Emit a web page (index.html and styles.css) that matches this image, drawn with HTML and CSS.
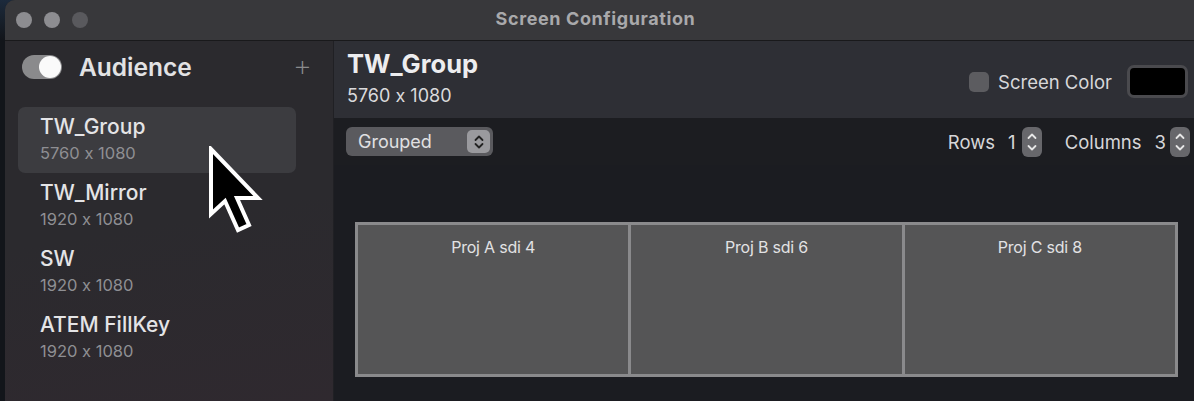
FILE: index.html
```html
<!DOCTYPE html>
<html>
<head>
<meta charset="utf-8">
<link rel="stylesheet" href="styles.css">
</head>
<body>
<div class="desk">
  <div class="window">
    <div class="titlebar">
      <div class="lights">
        <span class="light"></span><span class="light"></span><span class="light dim"></span>
      </div>
      <div class="title">Screen Configuration</div>
    </div>
    <div class="content">
      <aside class="sidebar">
        <div class="side-head">
          <div class="toggle"><span class="knob"></span></div>
          <div class="side-title">Audience</div>
          <div class="plus">+</div>
        </div>
        <ul class="list">
          <li class="item selected"><div class="name">TW_Group</div><div class="res">5760 x 1080</div></li>
          <li class="item"><div class="name">TW_Mirror</div><div class="res">1920 x 1080</div></li>
          <li class="item"><div class="name">SW</div><div class="res">1920 x 1080</div></li>
          <li class="item"><div class="name">ATEM FillKey</div><div class="res">1920 x 1080</div></li>
        </ul>
      </aside>
      <main class="main">
        <div class="header">
          <div class="head-left">
            <div class="h-title">TW_Group</div>
            <div class="h-res">5760 x 1080</div>
          </div>
          <div class="head-right">
            <span class="checkbox"></span>
            <span class="sc-label">Screen Color</span>
            <span class="well"></span>
          </div>
        </div>
        <div class="toolbar">
          <div class="popup">
            <span class="popup-text">Grouped</span>
            <span class="popup-arrows">
              <svg width="14" height="18" viewBox="0 0 14 18"><path d="M3.5 7 L7 3.5 L10.5 7 M3.5 11 L7 14.5 L10.5 11" fill="none" stroke="#222" stroke-width="1.8" stroke-linecap="round" stroke-linejoin="round"/></svg>
            </span>
          </div>
          <div class="tools-right">
            <span class="t-label">Rows</span>
            <span class="t-val">1</span>
            <span class="stepper"><svg width="14" height="26" viewBox="0 0 14 26"><path d="M3.5 9 L7 5.5 L10.5 9 M3.5 17 L7 20.5 L10.5 17" fill="none" stroke="#e6e6e6" stroke-width="1.8" stroke-linecap="round" stroke-linejoin="round"/></svg></span>
            <span class="t-label cols">Columns</span>
            <span class="t-val">3</span>
            <span class="stepper"><svg width="14" height="26" viewBox="0 0 14 26"><path d="M3.5 9 L7 5.5 L10.5 9 M3.5 17 L7 20.5 L10.5 17" fill="none" stroke="#e6e6e6" stroke-width="1.8" stroke-linecap="round" stroke-linejoin="round"/></svg></span>
          </div>
        </div>
        <div class="canvas">
          <div class="screens">
            <div class="screen">Proj A sdi 4</div>
            <div class="screen">Proj B sdi 6</div>
            <div class="screen">Proj C sdi 8</div>
          </div>
        </div>
      </main>
    </div>
  </div>
  <svg class="cursor" width="60" height="92" viewBox="0 0 60 92">
    <path d="M3 3 L3 68 L17 55 L30 84 L41 79 L29 52 L50 52 Z" fill="#000" stroke="#fff" stroke-width="4" stroke-linejoin="miter"/>
  </svg>
</div>
</body>
</html>
```

FILE: styles.css
```css
* { box-sizing: border-box; }
html, body { margin: 0; padding: 0; }
body {
  width: 1194px;
  height: 401px;
  overflow: hidden;
  background: #15171c;
  font-family: Inter, "Liberation Sans", Arial, sans-serif;
  font-feature-settings: "calt" 0;
  color: #e6e6e6;
}
.desk {
  position: relative;
  width: 1194px;
  height: 401px;
  padding-left: 5px;
  background: linear-gradient(#1c2a3c 0, #12151a 40px, #12151a 100%);
}
.window {
  width: 1189px;
  height: 401px;
  border-top-left-radius: 10px;
  overflow: hidden;
  background: #2a292d;
  display: flex;
  flex-direction: column;
}
.titlebar {
  height: 41px;
  flex: none;
  background: #38383b;
  border-bottom: 1px solid #19191b;
  display: flex;
  align-items: center;
  position: relative;
}
.lights {
  display: flex;
  gap: 12px;
  padding-left: 11px;
}
.light {
  width: 16px;
  height: 16px;
  border-radius: 50%;
  background: #8d8d91;
}
.light.dim { background: #59595d; }
.title {
  position: absolute;
  left: 0;
  right: 0;
  top: 0;
  height: 40px;
  line-height: 38px;
  text-align: center;
  font-weight: 700;
  font-size: 18px;
  letter-spacing: 0.6px;
  color: #a9a9ab;
  padding-right: 8px;
}
.content {
  flex: 1;
  display: flex;
  min-height: 0;
}
.sidebar {
  width: 329px;
  flex: none;
  background: linear-gradient(170deg, #2b2a2e 0%, #2b2a2e 50%, #2f292f 100%);
  border-right: 1px solid #202024;
}
.side-head {
  height: 52px;
  display: flex;
  align-items: center;
  padding: 0 21px 0 17px;
}
.toggle {
  width: 40px;
  height: 24px;
  border-radius: 12px;
  background: #8a8a8c;
  position: relative;
  flex: none;
}
.knob {
  position: absolute;
  right: 1px;
  top: 1px;
  width: 22px;
  height: 22px;
  border-radius: 50%;
  background: #fafafa;
}
.side-title {
  margin-left: 17px;
  font-size: 24.5px;
  font-weight: 600;
  color: #e2e2e4;
  flex: 1;
}
.plus {
  font-size: 30px;
  font-weight: 200;
  color: #8a8a8c;
  line-height: 1;
  margin-top: -4px;
}
.list {
  list-style: none;
  margin: 0;
  padding: 14px 37px 0 13px;
}
.item {
  height: 66px;
  padding: 7px 0 0 22px;
  border-radius: 7px;
}
.item.selected { background: #3c3c40; }
.name {
  font-size: 21px;
  font-weight: 500;
  color: #e4e4e6;
  line-height: 26px;
}
.res {
  font-size: 16.5px;
  color: #8f8f93;
  line-height: 22px;
  margin-top: 2px;
}
.main {
  flex: 1;
  display: flex;
  flex-direction: column;
  background: #1b1c21;
}
.header {
  height: 77px;
  flex: none;
  background: #2e2f35;
  display: flex;
  align-items: center;
  justify-content: space-between;
  padding: 0 6px 0 13px;
}
.head-left { margin-top: -4px; }
.h-title {
  font-size: 25.5px;
  font-weight: 700;
  color: #ededef;
  line-height: 30px;
}
.h-res {
  font-size: 18px;
  color: #dadadc;
  line-height: 22px;
  margin-top: 6px;
}
.head-right {
  display: flex;
  align-items: center;
  margin-top: 4px;
}
.checkbox {
  width: 20px;
  height: 20px;
  border-radius: 5px;
  background: #5c5c60;
}
.sc-label {
  margin-left: 9px;
  font-size: 18.5px;
  color: #d8d8da;
}
.well {
  margin-left: 15px;
  width: 61px;
  height: 33px;
  border-radius: 7px;
  background: #000;
  border: 3px solid #4a4a4e;
}
.toolbar {
  height: 47px;
  flex: none;
  background: #1c1d21;
  display: flex;
  align-items: center;
  justify-content: space-between;
  padding: 0 4px 0 12px;
}
.popup {
  width: 147px;
  height: 29px;
  border-radius: 6px;
  background: #5a5a5e;
  display: flex;
  align-items: center;
  justify-content: space-between;
  padding: 0 3px 0 12px;
}
.popup-text {
  font-size: 18px;
  color: #e0e0e2;
}
.popup-arrows {
  width: 23px;
  height: 23px;
  border-radius: 5px;
  background: #9a9a9e;
  display: flex;
  align-items: center;
  justify-content: center;
}
.tools-right {
  display: flex;
  align-items: center;
}
.t-label {
  font-size: 18.5px;
  color: #d6d6d8;
}
.t-label.cols { margin-left: 23px; }
.t-val {
  margin-left: 13px;
  font-size: 18.5px;
  color: #d6d6d8;
}
.stepper {
  margin-left: 4px;
  width: 20px;
  height: 30px;
  border-radius: 6px;
  background: #67676b;
  display: flex;
  align-items: center;
  justify-content: center;
}
.stepper:nth-of-type(3) { margin-left: 6px; }
.canvas {
  flex: 1;
  padding: 57px 16px 0 21px;
}
.screens {
  display: flex;
  height: 155px;
}
.screen {
  flex: 1;
  background: #555556;
  border: 3px solid #8a8a8c;
  margin-left: -3px;
  text-align: center;
  font-size: 16px;
  color: #e2e2e4;
  padding-top: 12px;
  letter-spacing: -0.2px;
}
.screen:first-child { margin-left: 0; }
.cursor {
  position: absolute;
  left: 208px;
  top: 146px;
}
```
